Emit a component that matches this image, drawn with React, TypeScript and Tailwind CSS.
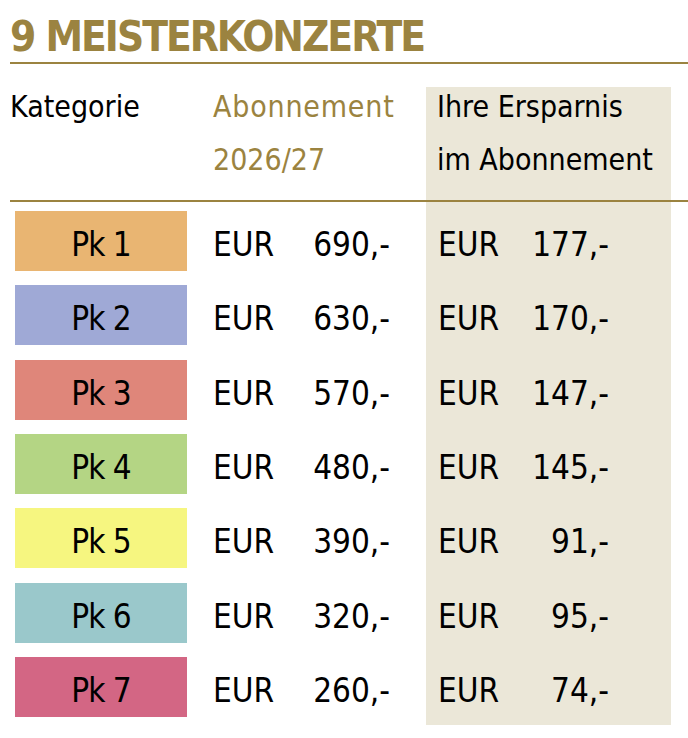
const rows = [
  { pk: "Pk 1", bg: "bg-[#e9b572]", price: "690,-", save: "177,-" },
  { pk: "Pk 2", bg: "bg-[#9fa9d6]", price: "630,-", save: "170,-" },
  { pk: "Pk 3", bg: "bg-[#df867a]", price: "570,-", save: "147,-" },
  { pk: "Pk 4", bg: "bg-[#b4d584]", price: "480,-", save: "145,-" },
  { pk: "Pk 5", bg: "bg-[#f6f680]", price: "390,-", save: "91,-" },
  { pk: "Pk 6", bg: "bg-[#9ac8cb]", price: "320,-", save: "95,-" },
  { pk: "Pk 7", bg: "bg-[#d36684]", price: "260,-", save: "74,-" },
];

// preisliste meisterkonzerte, spalte "ersparnis" beige hinterlegt
export default function App() {
  return (
    <div className="w-[688px] h-[738px] bg-white text-black font-['DejaVu_Sans_Condensed','DejaVu_Sans',sans-serif] overflow-hidden">
      <div className="ml-[10px]">
        <h1 className="pt-[16px] text-[42px] leading-[42px] font-bold text-[#9b8340] tracking-[-2px]">
          9 MEISTERKONZERTE
        </h1>
        <div className="mt-[4px] h-[2px] bg-[#9b8340]" />

        {/* kopfzeile */}
        <div className="grid grid-cols-[203px_213px_245px] pt-[23px] text-[30px] leading-[40px]">
          <div className="h-[113px]">
            <div>Kategorie</div>
          </div>
          <div className="h-[113px] text-[#9b8340]">
            <div className="tracking-[0.8px]">Abonnement</div>
            <div className="mt-[13px]">2026/27</div>
          </div>
          <div className="h-[113px] bg-[#ebe7d8] pl-[11px]">
            <div>Ihre Ersparnis</div>
            <div className="mt-[13px]">im Abonnement</div>
          </div>
        </div>
        <div className="h-[2px] bg-[#9b8340]" />

        {/* preise */}
        <div className="flex flex-col">
          {rows.map((r, i) => (
            <div
              key={r.pk}
              className={`grid grid-cols-[203px_213px_245px] text-[33px] leading-[68px] ${
                i === rows.length - 1 ? "h-[69px]" : "h-[74.33px]"
              }`}
            >
              <div className="pl-[5px] pt-[9px]">
                <div className={`${r.bg} w-[172px] h-[60px] text-center tracking-[-1px]`}>{r.pk}</div>
              </div>
              <div className="pt-[9px] flex justify-between pr-[36px]">
                <span>EUR</span>
                <span>{r.price}</span>
              </div>
              <div className="pt-[9px] bg-[#ebe7d8] flex justify-between pl-[12px] pr-[62px]">
                <span>EUR</span>
                <span>{r.save}</span>
              </div>
            </div>
          ))}
        </div>
      </div>
    </div>
  );
}
